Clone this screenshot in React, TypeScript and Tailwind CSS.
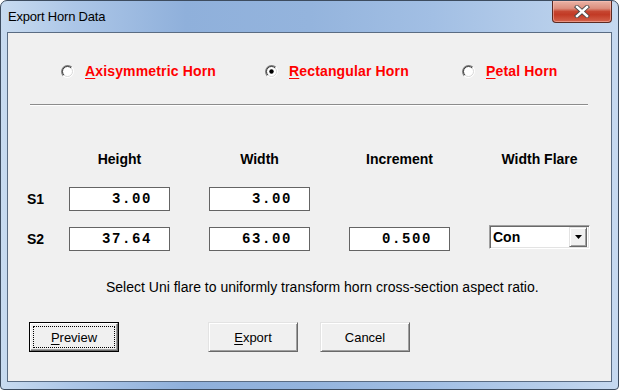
import React from "react";

const Radio = ({ checked }: { checked?: boolean }) => (
  <svg width="13" height="13" viewBox="0 0 13 13" className="shrink-0">
    <circle cx="6.5" cy="6.5" r="5" fill="#ffffff" />
    <path d="M2.26 10.74 A6 6 0 0 1 10.74 2.26" fill="none" stroke="#7a7a7a" strokeWidth="1.2" />
    <path d="M10.74 2.26 A6 6 0 0 1 2.26 10.74" fill="none" stroke="#ffffff" strokeWidth="1.2" />
    <path d="M2.96 10.04 A5 5 0 0 1 10.04 2.96" fill="none" stroke="#3a3a3a" strokeWidth="1" />
    <path d="M10.04 2.96 A5 5 0 0 1 2.96 10.04" fill="none" stroke="#d8d8d8" strokeWidth="1" />
    {checked && <circle cx="6.5" cy="6.5" r="2.2" fill="#000000" />}
  </svg>
);

const RadioItem = ({ first, rest, checked, w }: { first: string; rest: string; checked?: boolean; w: string }) => (
  <div className={`flex items-center h-[14px] gap-[11px] shrink-0 ${w}`}>
    <Radio checked={checked} />
    <span className="font-bold text-[14px] leading-[14px] text-[#ff0000] whitespace-nowrap tracking-[0.15px]">
      <span className="underline underline-offset-[2px] decoration-1">{first}</span>
      {rest}
    </span>
  </div>
);

const ValueBox = ({ v }: { v: string }) => (
  <div className="w-[101px] h-[24px] bg-white border border-[#646464] flex items-center justify-end pr-[17px] shrink-0">
    <span className="font-['Liberation_Mono',monospace] font-bold text-[14px] leading-[14px] tracking-[1.6px] text-black">
      {v}
    </span>
  </div>
);

const Btn = ({ children, def }: { children: React.ReactNode; def?: boolean }) =>
  def ? (
    <div className="w-[90px] h-[30px] border border-black shrink-0">
      <div className="w-full h-full border border-t-white border-l-white border-b-[#696969] border-r-[#696969] shadow-[inset_-1px_-1px_0_#a0a0a0] bg-[#f0f0f0] p-[2px]">
        <div className="w-full h-full border border-dotted border-black flex items-center justify-center text-[13px] leading-[15px] text-black">
          {children}
        </div>
      </div>
    </div>
  ) : (
    <div className="w-[90px] h-[30px] border border-t-[#e3e3e3] border-l-[#e3e3e3] border-b-[#696969] border-r-[#696969] shadow-[inset_1px_1px_0_#ffffff,inset_-1px_-1px_0_#a0a0a0] bg-[#f0f0f0] flex items-center justify-center text-[13px] leading-[15px] text-black shrink-0">
      {children}
    </div>
  );

export default function App() {
  return (
    <div className="w-[619px] h-[390px] bg-white font-['Liberation_Sans',Arial,sans-serif]">
      <div className="w-full h-full flex flex-col border border-[#3d4c5f] rounded-t-[7px] rounded-b-[4px] overflow-hidden bg-[linear-gradient(90deg,#c8dbf0_0%,#acc6e7_12%,#8fb0db_30%,#94b4dd_50%,#a2bfe4_70%,#b8cfeb_90%,#c6d9f0_100%)]">
        {/* title bar */}
        <div className="h-[31px] flex items-start justify-between shrink-0">
          <div className="pl-[7px] pt-[8px] text-[13px] leading-[16px] text-black tracking-[-0.2px]">Export Horn Data</div>
          <div className="mr-[6px] w-[60px] h-[22px] rounded-b-[4px] border border-t-0 border-[#5b2a22] bg-[linear-gradient(180deg,#eab3a6_0%,#dd8f7e_35%,#c64631_50%,#c23a25_65%,#d4634c_100%)] shadow-[inset_0_0_0_1px_rgba(255,200,190,0.5)] flex items-center justify-center">
            <svg width="16" height="13" viewBox="0 0 16 13">
              <path d="M3 2 L13 11 M13 2 L3 11" stroke="#4a4a4a" strokeWidth="4.2" strokeLinecap="square" />
              <path d="M3 2 L13 11 M13 2 L3 11" stroke="#ffffff" strokeWidth="2.4" strokeLinecap="square" />
            </svg>
          </div>
        </div>
        {/* client */}
        <div className="flex-1 mx-[6px] mb-[7px] border border-[#5a6c83] bg-[#f0f0f0] flex flex-col">
          {/* radios */}
          <div className="flex mt-[31px] pl-[53px]">
            <RadioItem first="A" rest="xisymmetric Horn" w="w-[204px]" />
            <RadioItem first="R" rest="ectangular Horn" checked w="w-[197px]" />
            <RadioItem first="P" rest="etal Horn" w="w-[120px]" />
          </div>
          {/* separator */}
          <div className="mt-[26px] ml-[22px] mr-[23px] border-t border-t-[#8c8c8c] border-b border-b-white" />
          {/* headers */}
          <div className="mt-[46px] h-[14px] flex pl-[61px] gap-[39px]">
            {["Height", "Width", "Increment", "Width Flare"].map((h) => (
              <div key={h} className="w-[101px] text-center font-bold text-[14px] leading-[14px] text-black whitespace-nowrap">
                {h}
              </div>
            ))}
          </div>
          {/* S1 */}
          <div className="mt-[21px] flex items-center h-[24px]">
            <div className="w-[61px] pl-[19px] font-bold text-[14px] leading-[14px] text-black">S1</div>
            <div className="flex gap-[39px]">
              <ValueBox v="3.00" />
              <ValueBox v="3.00" />
            </div>
          </div>
          {/* S2 */}
          <div className="mt-[16px] flex items-start h-[24px]">
            <div className="w-[61px] pl-[19px] h-[24px] flex items-center font-bold text-[14px] leading-[14px] text-black">S2</div>
            <div className="flex gap-[39px] items-start">
              <ValueBox v="37.64" />
              <ValueBox v="63.00" />
              <ValueBox v="0.500" />
              <div className="w-[101px] h-[24px] -mt-[2px] bg-white border border-t-[#a0a0a0] border-l-[#a0a0a0] border-b-white border-r-white shadow-[inset_1px_1px_0_#696969,inset_-1px_-1px_0_#e3e3e3] flex items-center shrink-0">
                <span className="pl-[3px] font-bold text-[14px] leading-[14px] text-black">Con</span>
                <div className="ml-auto mr-[2px] w-[18px] h-[20px] bg-[#f0f0f0] border border-t-[#e3e3e3] border-l-[#e3e3e3] border-b-[#696969] border-r-[#696969] shadow-[inset_1px_1px_0_#ffffff,inset_-1px_-1px_0_#a0a0a0] flex items-center justify-center">
                  <svg width="7" height="4" viewBox="0 0 7 4">
                    <path d="M0 0 H7 L3.5 4 Z" fill="#000000" />
                  </svg>
                </div>
              </div>
            </div>
          </div>
          {/* description */}
          <div className="mt-[28px] pl-[98px] text-[14px] leading-[16px] text-black whitespace-nowrap">
            Select Uni flare to uniformly transform horn cross-section aspect ratio.
          </div>
          {/* buttons */}
          <div className="mt-[27px] flex pl-[21px]">
            <Btn def>
              <span className="underline underline-offset-[2px] decoration-1">P</span>review
            </Btn>
            <div className="ml-[89px]">
              <Btn>
                <span className="underline underline-offset-[2px] decoration-1">E</span>xport
              </Btn>
            </div>
            <div className="ml-[22px]">
              <Btn>Cancel</Btn>
            </div>
          </div>
        </div>
      </div>
    </div>
  );
}
